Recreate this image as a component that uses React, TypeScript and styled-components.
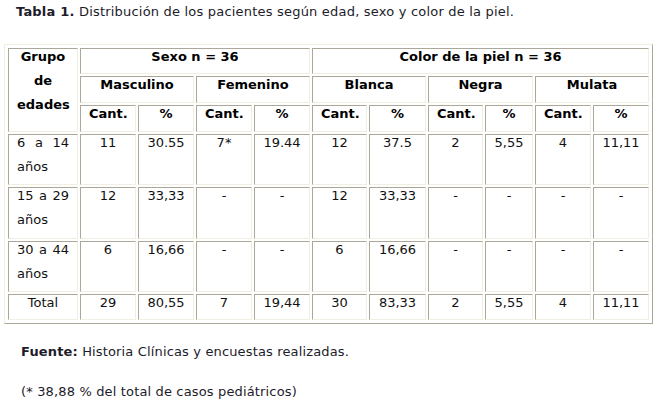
import React from 'react';
import styled, { createGlobalStyle } from 'styled-components';

const GlobalStyle = createGlobalStyle`
  * { box-sizing: border-box; }
  html, body {
    margin: 0;
    padding: 0;
    background: #ffffff;
  }
  body {
    font-family: "DejaVu Sans", Verdana, sans-serif;
    font-size: 13px;
    color: #111;
  }
`;

const Page = styled.div`
  width: 657px;
  padding: 4px 4px 0 4px;
`;

const Caption = styled.p`
  margin: 0 0 24px 12px;
  line-height: 16px;
  letter-spacing: 0.2px;
  color: #1c1c2a;
`;

const Table = styled.table`
  width: 649px;
  table-layout: fixed;
  border-collapse: separate;
  border-spacing: 2px;
  padding: 1px;
  border: 1px solid;
  border-color: #f1efe2 #aca899 #aca899 #f1efe2;
`;

const Row = styled.tr<{ $h: number }>`
  height: ${(p) => p.$h}px;
`;

const Cell = styled.td<{ $align?: 'center' | 'justify'; $bold?: boolean }>`
  border: 1px solid;
  border-color: #aca899 #f1efe2 #f1efe2 #aca899;
  padding: 0 8px;
  vertical-align: top;
  line-height: 24px;
  text-align: ${(p) => p.$align || 'center'};
  text-align-last: ${(p) => (p.$align === 'justify' ? 'left' : 'auto')};
  font-weight: ${(p) => (p.$bold ? 'bold' : 'normal')};
  color: ${(p) => (p.$bold ? '#000' : '#111')};
`;

const CellText = styled.div`
  margin-top: -4px;
`;

const Note = styled.p<{ $gap: number }>`
  margin: ${(p) => p.$gap}px 0 0 17px;
  line-height: 16px;
  letter-spacing: 0.15px;
  color: #1c1c2a;
`;

const colWidths = [70, 56, 56, 56, 56, 55, 57, 55, 48, 56, 56];

type DataRow = { age: string; values: string[]; h: number };

const rows: DataRow[] = [
  { age: '6 a 14 años', h: 51, values: ['11', '30.55', '7*', '19.44', '12', '37.5', '2', '5,55', '4', '11,11'] },
  { age: '15 a 29 años', h: 52, values: ['12', '33,33', '-', '-', '12', '33,33', '-', '-', '-', '-'] },
  { age: '30 a 44 años', h: 51, values: ['6', '16,66', '-', '-', '6', '16,66', '-', '-', '-', '-'] },
];

const totals = ['29', '80,55', '7', '19,44', '30', '83,33', '2', '5,55', '4', '11,11'];

const groups = ['Masculino', 'Femenino', 'Blanca', 'Negra', 'Mulata'];

function Head({ children, ...rest }: { children: React.ReactNode; colSpan?: number; rowSpan?: number }) {
  return (
    <Cell $bold {...rest}>
      <CellText>{children}</CellText>
    </Cell>
  );
}

export default function App() {
  return (
    <>
      <GlobalStyle />
      <Page>
        <Caption>
          <b>Tabla 1.</b> Distribución de los pacientes según edad, sexo y color de la piel.
        </Caption>
        <Table>
          <colgroup>
            {colWidths.map((w, i) => (
              <col key={i} style={{ width: w }} />
            ))}
          </colgroup>
          <tbody>
            <Row $h={26}>
              <Head rowSpan={3}>
                Grupo
                <br />
                de
                <br />
                edades
              </Head>
              <Head colSpan={4}>Sexo n = 36</Head>
              <Head colSpan={6}>Color de la piel n = 36</Head>
            </Row>
            <Row $h={27}>
              {groups.map((g) => (
                <Head key={g} colSpan={2}>
                  {g}
                </Head>
              ))}
            </Row>
            <Row $h={27}>
              {groups.map((g) => (
                <React.Fragment key={g}>
                  <Head>Cant.</Head>
                  <Head>%</Head>
                </React.Fragment>
              ))}
            </Row>
            {rows.map((r) => (
              <Row $h={r.h} key={r.age}>
                <Cell $align="justify">
                  <CellText>{r.age}</CellText>
                </Cell>
                {r.values.map((v, i) => (
                  <Cell key={i}>
                    <CellText>{v}</CellText>
                  </Cell>
                ))}
              </Row>
            ))}
            <Row $h={26}>
              <Cell>
                <CellText>Total</CellText>
              </Cell>
              {totals.map((v, i) => (
                <Cell key={i}>
                  <CellText>{v}</CellText>
                </Cell>
              ))}
            </Row>
          </tbody>
        </Table>
        <Note $gap={20}>
          <b>Fuente:</b> Historia Clínicas y encuestas realizadas.
        </Note>
        <Note $gap={24}>(* 38,88 % del total de casos pediátricos)</Note>
      </Page>
    </>
  );
}
